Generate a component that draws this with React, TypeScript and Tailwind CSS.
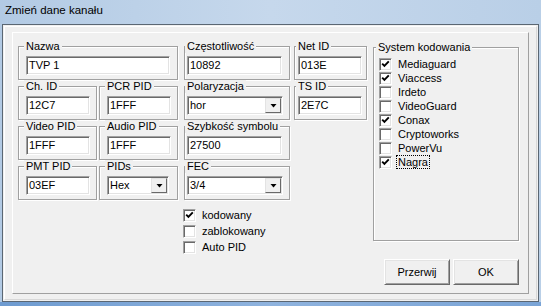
import type { ReactNode } from "react";

const sunken =
  "border border-t-[#a0a0a0] border-l-[#a0a0a0] border-r-white border-b-white shadow-[inset_1px_1px_0_#696969,inset_-1px_-1px_0_#e3e3e3]";

function Check({ checked }: Readonly<{ checked?: boolean }>) {
  return (
    <span className={`relative block h-[13px] w-[13px] shrink-0 bg-white ${sunken}`}>
      {checked ? (
        <svg viewBox="0 0 11 11" className="absolute left-0 top-0 h-[11px] w-[11px]">
          <path d="M2.2 4.6 L4.4 6.9 L8.8 2.4" fill="none" stroke="#000" strokeWidth="1.9" />
        </svg>
      ) : null}
    </span>
  );
}

function CheckRow({
  label,
  checked,
  focus,
  height,
}: Readonly<{ label: string; checked?: boolean; focus?: boolean; height: string }>) {
  return (
    <div className={`flex items-center ${height}`}>
      <Check checked={checked} />
      <span
        className={
          focus
            ? "ml-[4px] border border-dotted border-black px-[1px] leading-[12px]"
            : "ml-[6px] leading-[12px]"
        }
      >
        {label}
      </span>
    </div>
  );
}

function Field({ value, width }: Readonly<{ value: string; width: string }>) {
  return (
    <div className={`flex h-[19px] items-center bg-white pl-[2px] ${width} ${sunken}`}>
      {value}
    </div>
  );
}

function Select({ value, width }: Readonly<{ value: string; width: string }>) {
  return (
    <div className={`flex h-[19px] items-center bg-white ${width} ${sunken}`}>
      <span className="flex-1 pl-[2px]">{value}</span>
      <span className="mr-[1px] flex h-[15px] w-[16px] items-center justify-center border border-t-[#e3e3e3] border-l-[#e3e3e3] border-r-[#696969] border-b-[#696969] bg-[#f0f0f0]">
        <svg width="7" height="4" viewBox="0 0 7 4">
          <path d="M0.5 0h6L3.5 3.5z" fill="#000" />
        </svg>
      </span>
    </div>
  );
}

function Group({
  label,
  className,
  labelPos,
  children,
}: Readonly<{ label: string; className: string; labelPos: string; children: ReactNode }>) {
  return (
    <div className={`relative border border-[#a0a0a0] shadow-[inset_1px_1px_0_#fff,1px_1px_0_#fff] ${className}`}>
      <span className={`absolute -top-[7px] bg-[#f0f0f0] px-[2px] leading-[13px] ${labelPos}`}>{label}</span>
      {children}
    </div>
  );
}

function Button({ children }: Readonly<{ children: ReactNode }>) {
  return (
    <div className="flex h-[26px] w-[66px] items-center justify-center border border-t-white border-l-white border-r-[#696969] border-b-[#696969] bg-[#f0f0f0] shadow-[inset_1px_1px_0_#e3e3e3,inset_-1px_-1px_0_#a0a0a0]">
      {children}
    </div>
  );
}

export default function App() {
  const wide = "h-[34px] w-[79px] pl-[7px] pt-[9px]";
  const mid = "h-[34px] w-[106px] pl-[2px] pt-[9px]";
  const narrow = "h-[34px] w-[73px] pl-[3px] pt-[9px]";

  return (
    <div className="flex h-[306px] w-[541px] flex-col bg-gradient-to-r from-[#b2cae4] via-[#c6d8ec] to-[#b9cfe7] font-['Liberation_Sans',Arial,sans-serif] text-[11px] text-black">
      <div className="flex h-[24px] items-center pb-[2px] pl-[5px] text-[11.5px]">Zmień dane kanału</div>

      <div className="mx-[2px] h-[278px] border border-[#5b6773] bg-[#f0f0f0]">
        <div className="m-[1px] h-[274px] border border-t-white border-l-white border-r-[#d8d8d8] border-b-[#d8d8d8]">
          <div className="ml-[7px] mt-[5px] flex h-[262px] w-[517px] border border-t-white border-l-white border-r-[#a0a0a0] border-b-[#a0a0a0] pl-[5px] pt-[13px]">
            <div className="flex w-[349px] flex-col">
              <div className="grid grid-cols-[81px_85px_110px_73px] grid-rows-[34px_34px_34px_34px] gap-y-[6px]">
                <Group label="Nazwa" labelPos="left-[5px]" className="col-span-2 h-[34px] w-[160px] pl-[7px] pt-[9px]">
                  <Field value="TVP 1" width="w-[144px]" />
                </Group>
                <Group label="Częstotliwość" labelPos="left-0" className={mid}>
                  <Field value="10892" width="w-[95px]" />
                </Group>
                <Group label="Net ID" labelPos="left-[1px]" className={narrow}>
                  <Field value="013E" width="w-[64px]" />
                </Group>

                <Group label="Ch. ID" labelPos="left-[5px]" className={wide}>
                  <Field value="12C7" width="w-[64px]" />
                </Group>
                <Group label="PCR PID" labelPos="left-[5px]" className={wide}>
                  <Field value="1FFF" width="w-[64px]" />
                </Group>
                <Group label="Polaryzacja" labelPos="left-0" className={mid}>
                  <Select value="hor" width="w-[96px]" />
                </Group>
                <Group label="TS ID" labelPos="left-[1px]" className={narrow}>
                  <Field value="2E7C" width="w-[64px]" />
                </Group>

                <Group label="Video PID" labelPos="left-[5px]" className={wide}>
                  <Field value="1FFF" width="w-[64px]" />
                </Group>
                <Group label="Audio PID" labelPos="left-[5px]" className={wide}>
                  <Field value="1FFF" width="w-[64px]" />
                </Group>
                <Group label="Szybkość symbolu" labelPos="left-0" className={mid}>
                  <Field value="27500" width="w-[95px]" />
                </Group>
                <div />

                <Group label="PMT PID" labelPos="left-[5px]" className={wide}>
                  <Field value="03EF" width="w-[64px]" />
                </Group>
                <Group label="PIDs" labelPos="left-[5px]" className={wide}>
                  <Select value="Hex" width="w-[62px]" />
                </Group>
                <Group label="FEC" labelPos="left-0" className={mid}>
                  <Select value="3/4" width="w-[96px]" />
                </Group>
                <div />
              </div>

              <div className="ml-[165px] mt-[7px] flex flex-col">
                <CheckRow label="kodowany" checked height="h-[16px]" />
                <CheckRow label="zablokowany" height="h-[16px]" />
                <CheckRow label="Auto PID" height="h-[16px]" />
              </div>
            </div>

            <div className="ml-[6px] mt-[1px] flex w-[146px] flex-col">
              <Group label="System kodowania" labelPos="left-[2px]" className="h-[194px] w-[146px] pl-[5px] pt-[9px]">
                <div className="flex flex-col">
                  <CheckRow label="Mediaguard" checked height="h-[14px]" />
                  <CheckRow label="Viaccess" checked height="h-[14px]" />
                  <CheckRow label="Irdeto" height="h-[14px]" />
                  <CheckRow label="VideoGuard" height="h-[14px]" />
                  <CheckRow label="Conax" checked height="h-[14px]" />
                  <CheckRow label="Cryptoworks" height="h-[14px]" />
                  <CheckRow label="PowerVu" height="h-[14px]" />
                  <CheckRow label="Nagra" checked focus height="h-[14px]" />
                </div>
              </Group>
              <div className="mt-[18px] flex justify-end gap-[3px]">
                <Button>Przerwij</Button>
                <Button>OK</Button>
              </div>
            </div>
          </div>
        </div>
      </div>

      <div className="h-[4px] bg-gradient-to-r from-[#6e9bd0] via-[#8fb3de] to-[#7aa4d6]" />
    </div>
  );
}
